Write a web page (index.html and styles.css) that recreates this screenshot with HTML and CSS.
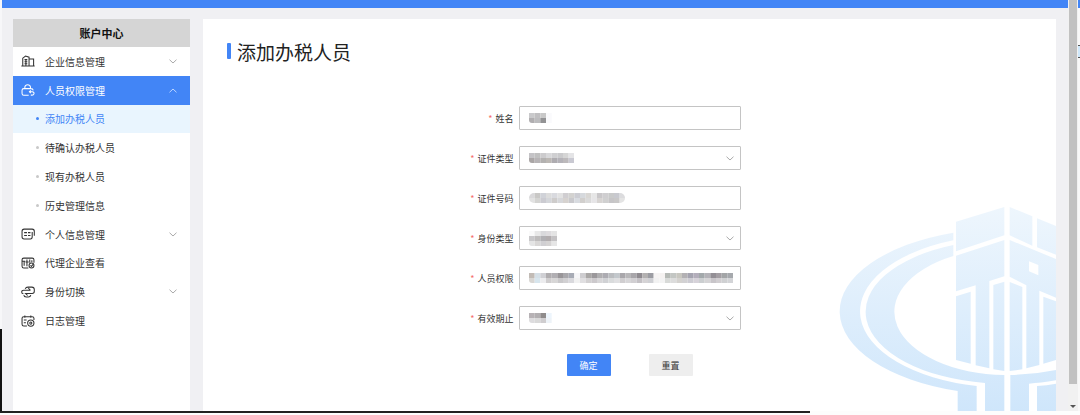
FILE: index.html
```html
<!doctype html>
<html lang="zh-CN">
<head>
	<meta charset="utf-8">
	<title>添加办税人员</title>
	<meta name="viewport" content="width=device-width, initial-scale=1.0">
	<link rel="stylesheet" href="styles.css">
</head>
<body>

<svg class="defs" aria-hidden="true">
	<symbol id="down" viewBox="0 0 8 5"><path d="M.5 .7L4 4L7.5 .7"/></symbol>
	<symbol id="up" viewBox="0 0 8 5"><path d="M.5 4.3L4 1L7.5 4.3"/></symbol>
</svg>

<div class="window">
	<div class="edge-left"></div>
	<div class="app">
		<header class="topbar"></header>
		<div class="content">
			<nav class="sidebar">
				<h2>账户中心</h2>
				<ul class="menu">
					<li><a href="#">
						<svg class="icon" viewBox="0 0 40 34"><path d="M1 31H39M5 31V9L13 3L23 6V31M23 11H36V31M10 13H18M10 19H18M10 25H18M14 13V31"/></svg>
						<span>企业信息管理</span><svg class="arrow"><use href="#down"/></svg>
					</a></li>
					<li><a href="#" class="open">
						<svg class="icon" viewBox="0 0 40 34"><path d="M22 32H8Q3 32 3 27V18Q3 13 8 13H28Q34 13 35 18M11 13V8Q12 2 19 2Q26 2 27 8V13M24 22H32Q38 23 37 28Q35 33 28 31M28 18L24 22L28 26"/></svg>
						<span>人员权限管理</span><svg class="arrow"><use href="#up"/></svg>
					</a></li>
					<li class="sub"><a href="#" class="active">添加办税人员</a></li>
					<li class="sub"><a href="#">待确认办税人员</a></li>
					<li class="sub"><a href="#">现有办税人员</a></li>
					<li class="sub"><a href="#">历史管理信息</a></li>
					<li><a href="#">
						<svg class="icon" viewBox="0 0 40 34"><path d="M9 3H32Q38 3 38 9V22M9 3Q3 3 3 9V25Q3 31 9 31H27Q32 31 32 25V11M9 13H17M20 13H27M9 21H17M20 21H27"/></svg>
						<span>个人信息管理</span><svg class="arrow"><use href="#down"/></svg>
					</a></li>
					<li><a href="#">
						<svg class="icon" viewBox="0 0 40 34"><path d="M21 31H8Q3 31 3 26V8Q3 3 8 3H32Q37 3 37 8V16M3 12H12M9 12V25M17 7V26M13 14H22M25 7V16M31 9V15"/><circle cx="30" cy="24" r="7"/><path d="M27 24L30 27L34 21"/></svg>
						<span>代理企业查看</span>
					</a></li>
					<li><a href="#">
						<svg class="icon" viewBox="0 0 40 34"><path d="M27 12H8Q2 12 2 17Q2 22 7 22M21 6L27 12M12 8Q14 3 20 3H31Q38 3 38 10V15Q38 21 32 21H13L19 27M8 26Q9 31 15 31H21Q27 31 28 26"/></svg>
						<span>身份切换</span><svg class="arrow"><use href="#down"/></svg>
					</a></li>
					<li><a href="#">
						<svg class="icon" viewBox="0 0 40 34"><path d="M17 31H8Q3 31 3 26V9Q3 5 8 5H32Q37 5 37 9V14M11 1V8M28 1V8M8 14H16M8 22H14"/><circle cx="28" cy="23" r="9"/><circle cx="28" cy="23" r="3"/></svg>
						<span>日志管理</span>
					</a></li>
				</ul>
			</nav>

			<main class="card">
				<h1>添加办税人员</h1>
				<svg class="watermark" viewBox="48 50 660 615" aria-hidden="true">
					<defs>
						<linearGradient id="sky" gradientUnits="userSpaceOnUse" x1="0" y1="50" x2="0" y2="665">
							<stop offset="0" stop-color="#eef6fd"/>
							<stop offset="1" stop-color="#cfe6fb"/>
						</linearGradient>
					</defs>
					<g fill="url(#sky)" fill-rule="evenodd">
						<!-- rings -->
						<path d="M400 130A505 250 0 0 0 413 605V665H470V590A442 229 0 0 1 400 153Z"/>
						<path d="M400 167A420 216 0 0 0 495 581V665H553V557A338 190 0 0 1 400 200Z"/>
						<path d="M571 557Q640 556 708 542V573Q660 581 627 583V665H571Z"/>
						<path d="M651 590Q680 588 708 583V665H651Z"/>
						<!-- tower, left side -->
						<path d="M408 97L553 53V138L408 186Z"/>
						<path d="M408 199L553 152V261L508 275V537L467 528V288L408 306Z"/>
						<path d="M408 321L452 307V523L408 512Z"/>
						<path d="M520 287L553 277V545L520 540Z"/>
						<!-- tower, right side -->
						<path d="M569 53L637 81V169L569 138Z"/>
						<path d="M651 87L708 110V196L651 174Z"/>
						<path d="M569 152L708 209V325L658 304V527L619 537V288L569 262ZM627 216V246L655 258V227Z"/>
						<path d="M569 278L607 293V540L569 545Z"/>
						<path d="M670 322L708 336V512L670 523Z"/>
					</g>
				</svg>

				<form>
					<div class="row">
						<label for="name">姓名</label>
						<div class="field">
							<input type="text" id="name">
							<svg class="mosaic" data-cells="c9c9cb c0bfc1 c8c8c8 fafafc|b0aeb0 bcbcbe 929294 fafafc"></svg>
						</div>
					</div>
					<div class="row">
						<label for="idType">证件类型</label>
						<div class="field">
							<select id="idType"><option></option></select>
							<svg class="mosaic" data-cells="c4c3c6 c0c0c0 cccbcd d8d8da cfcfd1 cacacc d5d5d5 e4e4e6|aaa6a6 b7b4b6 b3b1b0 bcb8b4 aeacb0 b4b2b8 bcb9bb c9c9d2"></svg>
							<svg class="arrow"><use href="#down"/></svg>
						</div>
					</div>
					<div class="row">
						<label for="idNumber">证件号码</label>
						<div class="field">
							<input type="text" id="idNumber">
							<svg class="mosaic round" data-cells="d9d8da c9c8c6 d0d2d8 dcdcdc d9dadf e2e2e2 d0ced1 d3d2d0 cccdd3 d6d9dd d9d7d4 e6e6e6 c9c7c9 cfced0 c9caca c8c9cf dcdcde|e2e2e2 d4d4d2 cbcbd1 d4d6da cecccb d6d7da d6d2cf c9c9cd d8dbe0 d1cfcd dadada e6e5e7 d7d4d2 d0d0d0 c6c5c7 c9c8c8 e4e4e4"></svg>
						</div>
					</div>
					<div class="row">
						<label for="role">身份类型</label>
						<div class="field">
							<select id="role"><option></option></select>
							<svg class="mosaic" data-cells="fafafa e8e8e8 d9d9dc dedcdf e4e4e4|c8c7c9 bebcbc b1b0b4 b2adaf c4c2c4|e4e4e4 d9d7d6 d0cfd2 d5d3d3 e6e6e6"></svg>
							<svg class="arrow"><use href="#down"/></svg>
						</div>
					</div>
					<div class="row">
						<label for="permission">人员权限</label>
						<div class="field">
							<input type="text" id="permission">
							<svg class="mosaic" data-cells="c2bbb5 d5dfe6 d0d0d4 b0adaf b1afb3 999699 a9a8ac a7abb5 f6f6f8 cecdd0 a9a7a6 9b989b b0afb1 adacb2 bbbdc0 c3c8cc a9a7ab b8b7b9 a8a6aa 8f8b90 b3b1b1 9c9da3 f6f4f4 f5f2f1 b6bab6 c3c6c3 c8c7c0 b3b1b4 a5a4b0 b3aebb a3a9ab b4b3b8 938f95 a39ea3 a3a5a7 a6a9ad|d8d6d3 d7e5ed ececee cfcdce d7d6d6 c9c8ca d1d0d2 d9d9dd f1f1f1 e0dfe1 d2d0d1 ccc9cc d7d6d8 d0d1d4 d9dbdc e0e0e2 d0ced0 d7d6d8 d1cfd2 c4c1c5 d5d3d5 cfd0d4 f2f2f2 f3f3f3 d8dad8 dcdcdc d4d2cf d2d1d3 cdccd3 d6d2d9 cbced0 d5d4d6 c8c5c9 d1ced1 cfd0d2 d3d4d7"></svg>
						</div>
					</div>
					<div class="row">
						<label for="validity">有效期止</label>
						<div class="field">
							<select id="validity"><option></option></select>
							<svg class="mosaic" data-cells="b7b2b5 b2afb1 8f8b8b edf5fc|dddcde d9d9d9 cfcdcf eef3f8"></svg>
							<svg class="arrow"><use href="#down"/></svg>
						</div>
					</div>
					<div class="buttons">
						<button type="submit" class="primary">确定</button>
						<button type="reset">重置</button>
					</div>
				</form>
			</main>
		</div>
	</div>
	<div class="scrollbar"><div class="thumb"></div><div class="scroll-down"></div></div>
	<div class="edge-right"><div class="strip"></div><div class="notch"></div></div>
</div>
<div class="baseline"></div>

<script src="script.js"></script>
</body>
</html>
```
FILE: styles.css
```css
* {
	box-sizing: border-box;
	margin: 0;
	padding: 0;
}
body {
	display: flex;
	flex-direction: column;
	min-height: 100vh;
	padding-bottom: 2px;
	background: #fdfdfd;
	color: #333;
	font-family: "Noto Sans CJK SC", sans-serif;
	font-size: 10px;
}
a { color: inherit; text-decoration: none; }
ul { list-style: none; }
.defs { position: absolute; width: 0; height: 0; }

.window { flex: 1; display: flex; }
.edge-left { width: 2px; background: linear-gradient(#f7f7f9 80%, #111 80%); }
.app {
	flex: 1;
	display: flex;
	flex-direction: column;
	background: #f0f0f3;
}
.topbar { height: 8px; background: #4285f6; }
.content {
	flex: 1;
	display: flex;
	gap: 13px;
	padding: 11px 12px 0 11px;
}

/* sidebar */
.sidebar { width: 177px; background: #fff; }
.sidebar h2 {
	height: 28px;
	line-height: 28px;
	background: #d5d5d5;
	color: #111;
	font-size: 11px;
	font-weight: bold;
	text-align: center;
}
.menu {
	display: grid;
	grid-template-rows: repeat(10, 1fr);
	height: 288px;
}
.menu a {
	display: flex;
	align-items: center;
	height: 100%;
	padding: 0 13px 0 8px;
}
.menu span { flex: 1; }
.menu .open { background: #4285f6; color: #fff; }
.menu .sub a { padding-left: 23px; }
.menu .sub a::before {
	content: "";
	width: 3px;
	height: 3px;
	margin-right: 6px;
	border-radius: 50%;
	background: #c8c8c8;
}
.menu .sub .active { background: #e9f5fe; color: #4285f6; }
.menu .sub .active::before { background: #4285f6; }
.icon {
	width: 14px;
	height: 12px;
	margin-right: 10px;
	fill: none;
	stroke: currentColor;
	stroke-width: 3;
}
.arrow {
	width: 8px;
	height: 5px;
	fill: none;
	stroke: #aaa;
}
.open .arrow { stroke: #bcd5ff; }

/* main card */
.card {
	position: relative;
	flex: 1;
	padding: 20px 24px 0;
	background: #fff;
}
.card h1 {
	display: flex;
	align-items: center;
	gap: 6px;
	height: 24px;
	color: #222;
	font-size: 19px;
	font-weight: normal;
}
.card h1::before {
	content: "";
	width: 4px;
	height: 16px;
	border-radius: 1px;
	background: #4285f6;
}
.watermark {
	position: absolute;
	right: 0;
	bottom: 0;
	width: 220px;
	height: 205px;
}

form {
	position: relative;
	display: grid;
	gap: 16px;
	margin-top: 43px;
}
.row {
	display: grid;
	grid-template-columns: 1fr 222px 1fr;
	column-gap: 5px;
	align-items: center;
}
label { font-size: 9px; text-align: right; }
label::before { content: "*"; margin-right: 3px; color: #f56c6c; }
.field { position: relative; height: 24px; }
.field input, .field select {
	display: block;
	width: 100%;
	height: 100%;
	padding: 0 10px;
	border: 1px solid #c4c4c4;
	border-radius: 1px;
	background: #fff;
	font: inherit;
	appearance: none;
}
.field .arrow { position: absolute; right: 7px; top: 10px; pointer-events: none; }
.mosaic {
	position: absolute;
	left: 10px;
	top: 0;
	bottom: 0;
	margin: auto 0;
	border-bottom-left-radius: 3px;
	pointer-events: none;
}
.mosaic.round { border-radius: 5px; }

.buttons {
	display: flex;
	justify-content: center;
	gap: 38px;
	margin-top: 8px;
}
button {
	width: 44px;
	height: 22px;
	border: 0;
	border-radius: 1px;
	background: #eee;
	color: #333;
	font-family: inherit;
	font-size: 9px;
}
button.primary { background: #4285f6; color: #fff; }

/* window frame */
.scrollbar {
	display: flex;
	flex-direction: column;
	align-items: center;
	width: 10px;
	background: #f1f1f1;
}
.thumb { width: 8px; flex: 1; background: #c1c1c1; }
.scroll-down {
	margin: 21px 0 3px;
	border: 3px solid transparent;
	border-top-color: #555;
	border-bottom: 0;
}
.edge-right { width: 2px; background: #f8f8f8; }
.strip { height: 8px; background: #4285f6; }
.notch {
	height: 13px;
	margin-top: 37px;
	border: solid #555;
	border-width: 1px 0;
	background: #cfe8fb;
}
.baseline { width: 75%; height: 2px; background: #222; }
```
FILE: script.js
```js
// fills each .mosaic with coloured cells, rows separated by "|"
var W = 17 / 3, H = 5;

document.querySelectorAll('.mosaic').forEach(function (svg) {
	var rows = svg.dataset.cells.split('|').map(function (r) { return r.split(' '); });
	svg.setAttribute('width', Math.round(rows[0].length * W));
	svg.setAttribute('height', rows.length * H);
	rows.forEach(function (row, y) {
		row.forEach(function (color, x) {
			var rect = document.createElementNS('http://www.w3.org/2000/svg', 'rect');
			rect.setAttribute('x', x * W);
			rect.setAttribute('y', y * H);
			rect.setAttribute('width', W);
			rect.setAttribute('height', H);
			rect.setAttribute('fill', '#' + color);
			svg.appendChild(rect);
		});
	});
});
```
